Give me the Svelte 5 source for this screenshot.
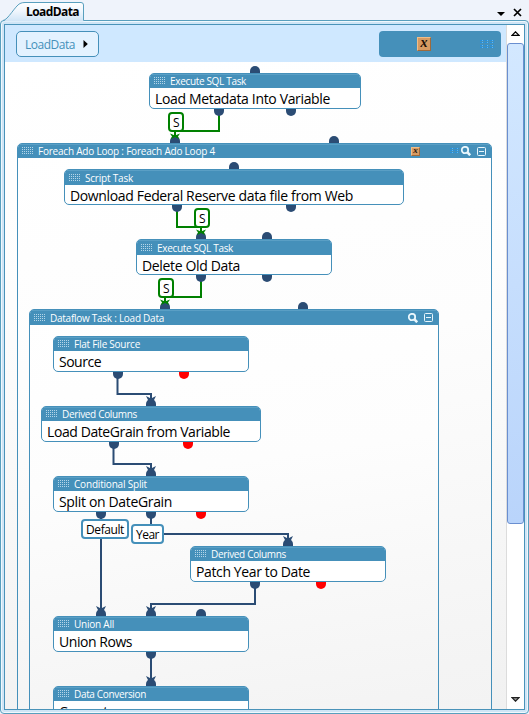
<script>
  const OX = 5;
  const OY = 62;

  const containers = [
    { x: 17, y: 143, w: 475, h: 620, title: 'Foreach Ado Loop : Foreach Ado Loop 4', tw: 177, hh: 14, vars: true },
    { x: 29, y: 309, w: 410, h: 460, title: 'Dataflow Task : Load Data', tw: 114, hh: 15, vars: false }
  ];

  const nodes = [
    { x: 149, y: 73, w: 212, type: 'Execute SQL Task', tw: 76, name: 'Load Metadata Into Variable', nw: 175 },
    { x: 64, y: 169, w: 340, hh: 15, type: 'Script Task', tw: 48, name: 'Download Federal Reserve data file from Web', nw: 283 },
    { x: 136, y: 239, w: 196, hh: 15, type: 'Execute SQL Task', tw: 76, name: 'Delete Old Data', nw: 98 },
    { x: 53, y: 336, w: 196, type: 'Flat File Source', tw: 66, name: 'Source', nw: 42 },
    { x: 41, y: 406, w: 220, type: 'Derived Columns', tw: 75, name: 'Load DateGrain from Variable', nw: 183 },
    { x: 53, y: 476, w: 196, type: 'Conditional Split', tw: 73, name: 'Split on DateGrain', nw: 113 },
    { x: 190, y: 546, w: 196, type: 'Derived Columns', tw: 75, name: 'Patch Year to Date', nw: 114 },
    { x: 53, y: 616, w: 196, type: 'Union All', tw: 40, name: 'Union Rows', nw: 73 },
    { x: 53, y: 686, w: 196, type: 'Data Conversion', tw: 72, name: 'Convert', nw: 49 }
  ];

  const badges = [
    { x: 168, y: 112, w: 16, text: 'S', tw: 6, ok: true },
    { x: 194, y: 208, w: 16, text: 'S', tw: 6, ok: true },
    { x: 158, y: 278, w: 16, text: 'S', tw: 6, ok: true },
    { x: 81, y: 519, w: 48, text: 'Default', tw: 38 },
    { x: 131, y: 524, w: 33, text: 'Year', tw: 23 }
  ];

  const topPorts = [
    [255, 73], [175, 143], [334, 143], [234, 169], [201, 239], [267, 239], [165, 309], [303, 309],
    [151, 406], [151, 476], [288, 546], [101, 616], [151, 616], [201, 616], [151, 686]
  ];
  const bottomPorts = [
    [219, 109], [291, 109], [177, 205], [291, 205], [201, 275], [267, 275], [118, 372], [184, 372, 1],
    [114, 442], [188, 442, 1], [101, 512], [151, 512], [201, 512, 1], [255, 582], [321, 582, 1], [151, 652]
  ];

  const green = [
    { d: 'M219 109V131H175V139', x: 175, y: 143 },
    { d: 'M177 205V227H201V235', x: 201, y: 239 },
    { d: 'M201 275V297H165V305', x: 165, y: 309 }
  ];
  const navy = [
    { d: 'M117.5 372V394H151V402', x: 151, y: 406 },
    { d: 'M113.5 442V464H151V472', x: 151, y: 476 },
    { d: 'M101 512V612', x: 101, y: 616 },
    { d: 'M151 512V534H288V542', x: 288, y: 546 },
    { d: 'M255 582V604H151V612', x: 151, y: 616 },
    { d: 'M151 652V682', x: 151, y: 686 }
  ];

  // Spreads the label's letters so that it takes the given width.
  function fit(el, width) {
    const natural = el.getBoundingClientRect().width;
    el.style.letterSpacing = (width - natural) / el.textContent.length + 'px';
  }
</script>

{#snippet grip()}
  <svg class="grip" width="12" height="8" viewBox="0 0 12 8">
    {#each [0, 2, 4, 6] as gy}
      {#each [0, 2, 4, 6, 8, 10] as gx}
        <rect x={gx} y={gy} width="1" height="1" fill="#b4d5e8" />
      {/each}
    {/each}
  </svg>
{/snippet}

{#snippet waves(w, rows)}
  <svg width={w} height="10" viewBox="0 0 {w} 10">
    {#each rows as wy}
      <path d="M0 {wy + 0.5}H{w}" stroke="#2590dc" stroke-dasharray="4 1" />
      <path d="M2 {wy + 0.5}H{w}" stroke="#66b8ee" stroke-dasharray="1 4" />
    {/each}
  </svg>
{/snippet}

<div class="window">
  <header class="tabs">
    <svg class="tab" width="90" height="25" viewBox="0 0 90 25">
      <defs>
        <linearGradient id="tabfill" x1="0" y1="0" x2="0" y2="1">
          <stop offset="0" stop-color="#ffffff" />
          <stop offset="0.45" stop-color="#f0f6fd" />
          <stop offset="1" stop-color="#cfe4f6" />
        </linearGradient>
      </defs>
      <path d="M3 21.5C8 20 15 6 20 3.5Q22 2.5 25 2.5H81Q83.500 2.500 83.500 5V21.500Z" fill="url(#tabfill)" />
      <path d="M3 20.500C8 20 15 6 20 3.500Q22 2.500 25 2.500H81Q83.500 2.500 83.500 5V20.500" fill="none" stroke="#599fbe" />
    </svg>
    <span class="tabname"><span use:fit={53}>LoadData</span></span>
    <span class="wbtns">
      <svg width="8" height="4" viewBox="0 0 8 4"><path d="M0 0H8L4 4Z" /></svg>
      <svg width="9" height="9" viewBox="0 0 9 9"><path d="M1 1L8 8M8 1L1 8" stroke="#000" stroke-width="1.7" /></svg>
    </span>
  </header>

  <div class="frame">
    <div class="inner">
      <main>
        <div class="toolbar">
          <div class="crumb">
            <span use:fit={50}>LoadData</span>
            <svg width="5" height="8" viewBox="0 0 5 8"><path d="M0.500 0L4.800 4L0.500 8Z" /></svg>
          </div>
          <div class="tools">
            <span class="var">x</span>
            {@render waves(15, [1, 3, 6, 8])}
          </div>
        </div>

        <div class="canvas">
          {#each containers as c}
            <section class="container" style="left:{c.x - OX}px;top:{c.y - OY}px;width:{c.w}px;height:{c.h}px">
              <div class="head" style="height:{c.hh}px">
                {@render grip()}
                <span class="type" use:fit={c.tw}>{c.title}</span>
                <span class="icons">
                  {#if c.vars}
                    <span class="var small">x</span>
                    {@render waves(9, [2, 4, 6])}
                  {/if}
                  <svg class="mag" width="10" height="10" viewBox="0 0 10 10"><circle cx="4" cy="4" r="3.200" fill="none" stroke="#e9f6fc" stroke-width="1.800" /><path d="M6.200 6.200L9.200 9.200" stroke="#e9f6fc" stroke-width="2.600" /></svg>
                  <svg width="9" height="9" viewBox="0 0 9 9"><rect x="0.500" y="0.500" width="8" height="8" rx="1" fill="none" stroke="#e9f6fc" /><path d="M2 4.500H7" stroke="#e9f6fc" /></svg>
                </span>
              </div>
            </section>
          {/each}

          <svg class="wires" width="501" height="647" viewBox="5 62 501 647">
            <g fill="none" stroke="#008000" stroke-width="2">
              {#each green as w}<path d={w.d} />{/each}
            </g>
            <g fill="none" stroke="#2b4c74" stroke-width="2">
              {#each navy as w}<path d={w.d} />{/each}
            </g>
            {#each topPorts as [x, y]}
              <path d="M{x - 5} {y}v-2a5 5 0 0 1 10 0v2Z" fill="#2b4c74" />
            {/each}
            {#each bottomPorts as [x, y, err]}
              <path d="M{x - 5} {y}v2a5 5 0 0 0 10 0v-2Z" fill={err ? '#ff0000' : '#2b4c74'} />
            {/each}
            {#each green as w}
              <path d="M{w.x - 5} {w.y - 9.500}L{w.x} {w.y - 7.500}L{w.x + 5} {w.y - 9.500}L{w.x + 3} {w.y - 6.500}L{w.x + 4} {w.y - 4}L{w.x} {w.y - 6}L{w.x - 4} {w.y - 4}L{w.x - 3} {w.y - 6.500}Z" fill="#008000" />
            {/each}
            {#each navy as w}
              <path d="M{w.x - 5} {w.y - 10}L{w.x} {w.y - 7.500}L{w.x + 5} {w.y - 10}L{w.x + 2.500} {w.y - 5}H{w.x - 2.500}Z" fill="#2b4c74" />
            {/each}
          </svg>

          {#each nodes as n}
            <article class="node" style="left:{n.x - OX}px;top:{n.y - OY}px;width:{n.w}px">
              <div class="head" style="height:{n.hh ?? 14}px">
                {@render grip()}
                <span class="type" use:fit={n.tw}>{n.type}</span>
              </div>
              <div class="name"><span use:fit={n.nw}>{n.name}</span></div>
            </article>
          {/each}

          {#each badges as b}
            <div class="badge" class:ok={b.ok} style="left:{b.x - OX}px;top:{b.y - OY}px;width:{b.w}px">
              <span use:fit={b.tw}>{b.text}</span>
            </div>
          {/each}
        </div>
      </main>

      <aside class="scroll">
        <svg width="9" height="5" viewBox="0 0 9 5"><path d="M1 4.300L4.500 0.800L8 4.300Z" fill="#fff" stroke="#000" stroke-width="1.200" /></svg>
        <div class="thumb"></div>
        <svg class="down" width="9" height="5" viewBox="0 0 9 5"><path d="M1 0.700L4.500 4.200L8 0.700Z" fill="#999" stroke="#222" stroke-width="1.200" /></svg>
      </aside>
    </div>
  </div>
</div>

<style>
  :global(body) { margin: 0; }
  .window {
    width: 529px; height: 714px; box-sizing: border-box; overflow: hidden;
    display: flex; flex-direction: column;
    background: #eff3fb;
    font-family: "Open Sans", "Noto Sans", sans-serif;
    color: #000;
  }
  svg { display: block; flex: none; }
  span { white-space: nowrap; }
  .tabs { position: relative; height: 20px; display: flex; align-items: center; z-index: 1; }
  .tab { position: absolute; left: 0; top: 0; }
  .tabname { position: relative; margin-left: 26px; margin-top: 4px; font-size: 12px; line-height: 16px; font-weight: 700; }
  .wbtns { margin-left: auto; margin-right: 7px; margin-top: 4px; display: flex; align-items: center; gap: 8px; }
  .wbtns svg:first-child { margin-top: 4px; }
  .frame {
    flex: 1; min-height: 0; box-sizing: border-box; display: flex;
    border: 1px solid #599fbe; border-radius: 4px; padding: 3px;
    background: #cfe5f6; box-shadow: inset 0 0 0 1px #f0f8fd;
  }
  .inner { flex: 1; min-width: 0; display: flex; border: 1px solid #4a93b9; overflow: hidden; }
  main { flex: 1; min-width: 0; display: flex; flex-direction: column; }
  .toolbar {
    height: 37px; box-sizing: border-box; padding: 6px 5px 5px 11px;
    display: flex; justify-content: space-between; background: #cfe8ff;
  }
  .crumb {
    width: 83px; height: 26px; box-sizing: border-box; border: 1px solid #4590ba; border-radius: 5px;
    background: #e3f2ff; color: #4590ba; font-size: 12px;
    display: flex; align-items: center; padding: 0 0 0 8px; gap: 8px;
  }
  .tools {
    width: 122px; height: 26px; box-sizing: border-box; border-radius: 4px; background: #4590ba;
    display: flex; align-items: center; justify-content: space-between; padding: 0 6px 0 38px;
  }
  .var {
    width: 14px; height: 14px; box-sizing: border-box; border: 1px solid; border-color: #f0bd88 #9e6a3c #9e6a3c #f0bd88;
    background: #d69a62; color: #1c1008; text-align: center;
    font: italic 700 14px/9px "Liberation Serif", serif;
  }
  .small { width: 9px; height: 9px; font-size: 9px; line-height: 5px; margin-right: 30px; }
  .canvas { position: relative; flex: 1; overflow: hidden; background: linear-gradient(175deg, #fff 0%, #fdfdfd 35%, #f5f5f5 80%, #f1f1f1 100%); }
  .wires { position: absolute; left: 0; top: 0; }
  .container, .node { position: absolute; box-sizing: border-box; border: 1px solid #4590ba; border-radius: 5px; overflow: hidden; }
  .container { background: linear-gradient(172deg, #fff 0%, #fdfdfd 35%, #f4f4f4 85%, #f2f2f2 100%); }
  .node { height: 36px; background: #fff; }
  .head { display: flex; align-items: center; background: #4590ba; color: #fff; padding-left: 4px; box-shadow: inset 0 1px 0 #5a9fc5; }
  .type { margin-left: 4px; font-size: 10px; line-height: 14px; font-weight: 500; }
  .icons { margin-left: auto; margin-right: 5px; display: flex; align-items: center; }
  .mag { margin: 0 6px 0 2px; }
  .name { padding-left: 5px; height: 20px; line-height: 21px; font-size: 14px; }
  .badge {
    position: absolute; box-sizing: border-box; height: 20px; border: 2px solid #4590ba; border-radius: 4px;
    background: #fff; font-size: 12px; line-height: 17px; display: flex; justify-content: center;
  }
  .ok { border-color: #008000; }
  .scroll {
    width: 18px; box-sizing: border-box; border-left: 1px solid #dcdcdc; background: #fff;
    display: flex; flex-direction: column; align-items: center; padding: 6px 0 7px;
  }
  .thumb {
    width: 17px; height: 481px; margin-top: 7px; box-sizing: border-box;
    border: 1px solid #6a8fd0; border-radius: 3px; background: linear-gradient(#d3e8ff, #b9d4fb);
  }
  .down { margin-top: auto; }
</style>
